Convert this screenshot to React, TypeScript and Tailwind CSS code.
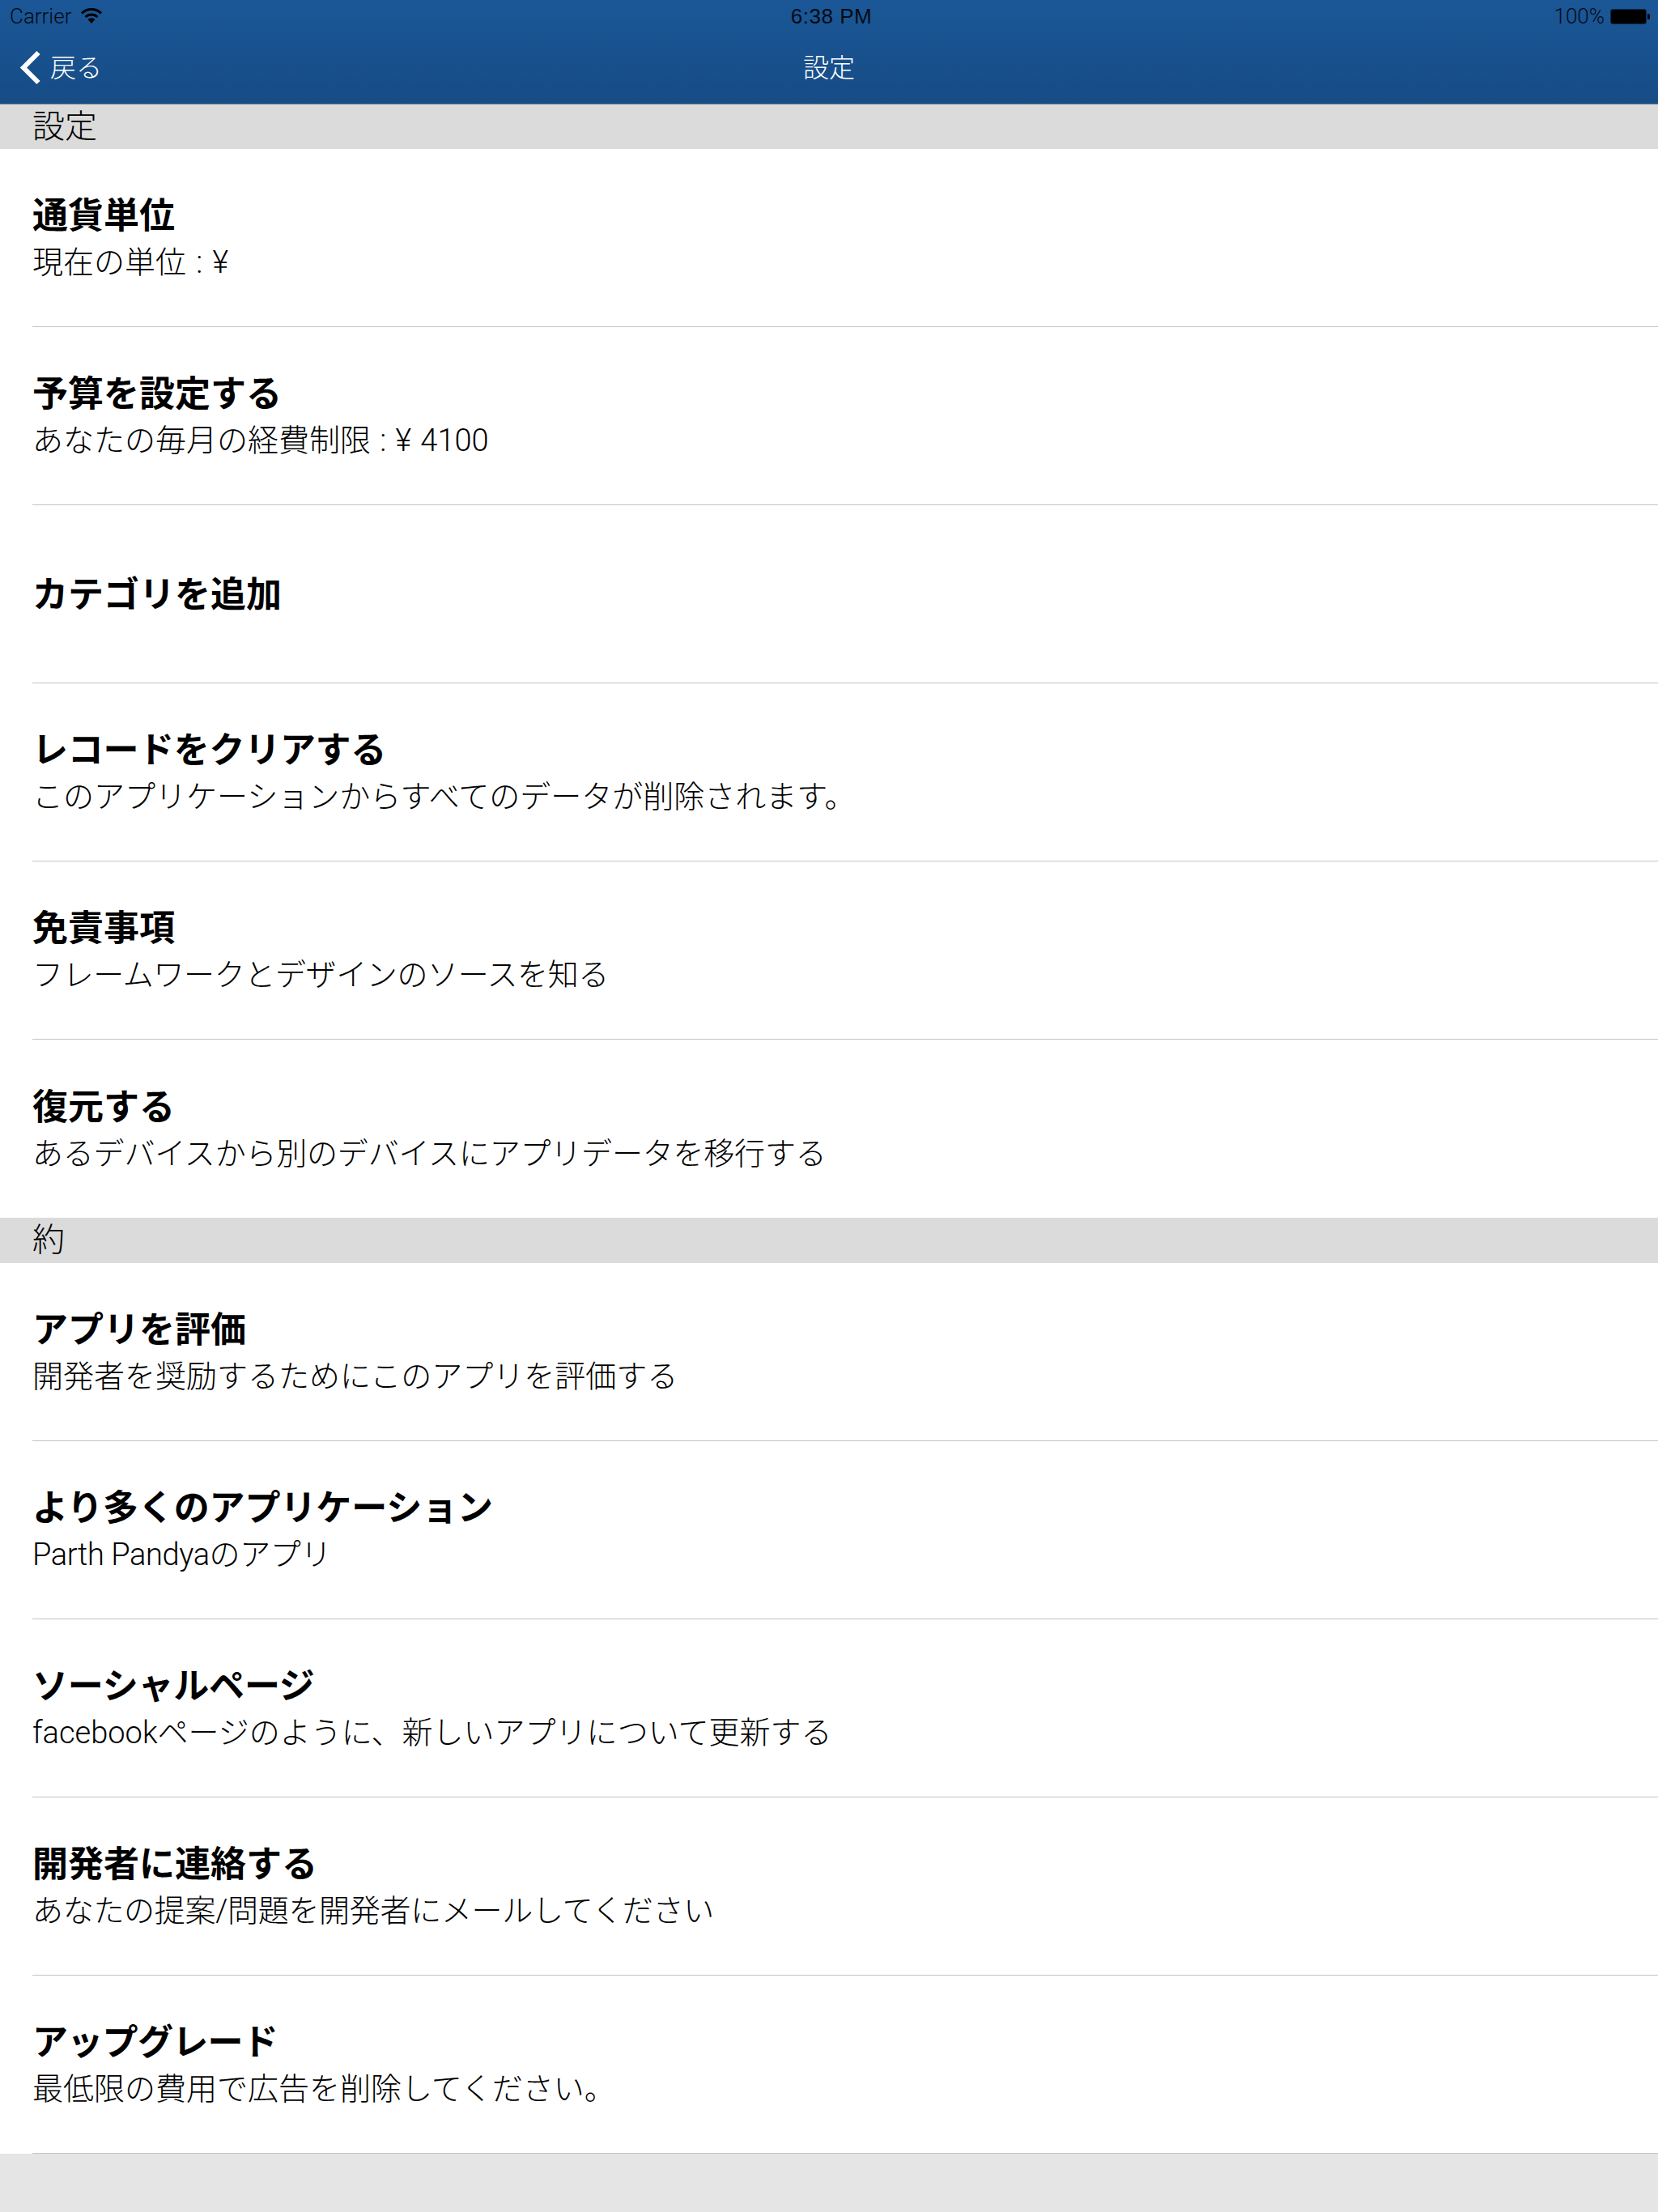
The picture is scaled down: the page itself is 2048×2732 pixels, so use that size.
const FONT = "font-['Liberation_Sans','Noto_Sans_CJK_JP',sans-serif]";
const LIGHT = "font-['Roboto','Noto_Sans_CJK_JP',sans-serif] font-light";

type Row = { title: string; sub?: string; noLine?: boolean; titleFit?: string; subFit?: string };

const SETTINGS: Row[] = [
  { title: "通貨単位", sub: "現在の単位 : ¥", subFit: "[word-spacing:3px]" },
  { title: "予算を設定する", sub: "あなたの毎月の経費制限 : ¥ 4100", subFit: "[word-spacing:2px]" },
  { title: "カテゴリを追加" },
  { title: "レコードをクリアする", sub: "このアプリケーションからすべてのデータが削除されます。", titleFit: "tracking-[-0.3px]" },
  { title: "免責事項", sub: "フレームワークとデザインのソースを知る", subFit: "tracking-[-0.37px]" },
  { title: "復元する", sub: "あるデバイスから別のデバイスにアプリデータを移行する", noLine: true, subFit: "tracking-[-0.2px]" },
];

const ABOUT: Row[] = [
  { title: "アプリを評価", sub: "開発者を奨励するためにこのアプリを評価する" },
  { title: "より多くのアプリケーション", sub: "Parth Pandyaのアプリ", titleFit: "tracking-[-0.1px]", subFit: "tracking-[-0.4px]" },
  { title: "ソーシャルページ", sub: "facebookページのように、新しいアプリについて更新する", titleFit: "tracking-[-0.2px]" },
  { title: "開発者に連絡する", sub: "あなたの提案/問題を開発者にメールしてください", subFit: "tracking-[-0.3px]" },
  { title: "アップグレード", sub: "最低限の費用で広告を削除してください。", titleFit: "tracking-[-0.7px]" },
];

function Wifi() {
  return (
    <svg width="26" height="20" viewBox="0 0 26 20" className="ml-[12px]">
      <path d="M1 6.5 A17 17 0 0 1 25 6.5" fill="none" stroke="#000" strokeWidth="3" />
      <path d="M5.5 11 A11 11 0 0 1 20.5 11" fill="none" stroke="#000" strokeWidth="3" />
      <path d="M8.5 14 A7 7 0 0 1 17.5 14 L13 19 Z" fill="#000" />
    </svg>
  );
}

function Battery() {
  return (
    <div className="ml-[7px] flex items-center">
      <div className="h-[19px] w-[45px] rounded-[3px] border border-[#0b2a4f] bg-black" />
      <div className="ml-[1px] h-[7px] w-[3px] rounded-r-[2px] bg-black" />
    </div>
  );
}

function NavBar() {
  return (
    <header className="h-[129px] border-b border-[#6f7a85] bg-gradient-to-b from-[#1b5797] to-[#164c86]">
      <div className="relative flex h-[40px] items-center justify-between pl-[12px] pr-[10px] text-[26px] text-[#050a14]">
        <div className="flex items-center">
          <span className={LIGHT}>Carrier</span>
          <Wifi />
        </div>
        <span className="absolute inset-x-0 top-[7px] pl-[6px] text-center text-[26px] leading-[26px] font-medium tracking-[0.5px]">
          6:38 PM
        </span>
        <div className="flex items-center">
          <span className={LIGHT}>100%</span>
          <Battery />
        </div>
      </div>
      <div className={`relative flex h-[88px] items-center text-[32px] text-white ${LIGHT}`}>
        <svg width="28" height="44" viewBox="0 0 28 44" className="ml-[24px]">
          <path d="M23.5 3 L5 21.5 L23.5 40" fill="none" stroke="#fff" strokeWidth="6" />
        </svg>
        <span className="ml-[10px]">戻る</span>
        <span className="absolute inset-x-0 text-center">設定</span>
      </div>
    </header>
  );
}

function SectionHeader({ label, tall }: { label: string; tall?: boolean }) {
  return (
    <div className={`flex items-center bg-[#dbdbdb] pl-[40px] text-[40px] leading-none text-black ${tall ? "h-[56px]" : "h-[55px]"} ${LIGHT}`}>
      {label}
    </div>
  );
}

function ListRow({ title, sub, noLine, titleFit = "", subFit = "" }: Row) {
  return (
    <div className={`flex h-[220px] flex-col justify-center text-black ${sub ? "pt-[5px]" : "pt-[2px]"} ${noLine ? "" : "border-b border-[#c4c4c4]"}`}>
      <div className={`text-[44px] leading-[56px] font-bold ${titleFit}`}>{title}</div>
      {sub && <div className={`text-[38px] leading-[58px] ${LIGHT} ${subFit}`}>{sub}</div>}
    </div>
  );
}

export default function App() {
  return (
    <div className={`flex min-h-[2732px] flex-col bg-[#e5e5e5] ${FONT}`}>
      <NavBar />
      <SectionHeader label="設定" />
      <div className="bg-white pl-[40px]">
        {SETTINGS.map((r) => (
          <ListRow key={r.title} {...r} />
        ))}
      </div>
      <SectionHeader label="約" tall />
      <div className="bg-white pl-[40px]">
        {ABOUT.map((r) => (
          <ListRow key={r.title} {...r} />
        ))}
      </div>
    </div>
  );
}
